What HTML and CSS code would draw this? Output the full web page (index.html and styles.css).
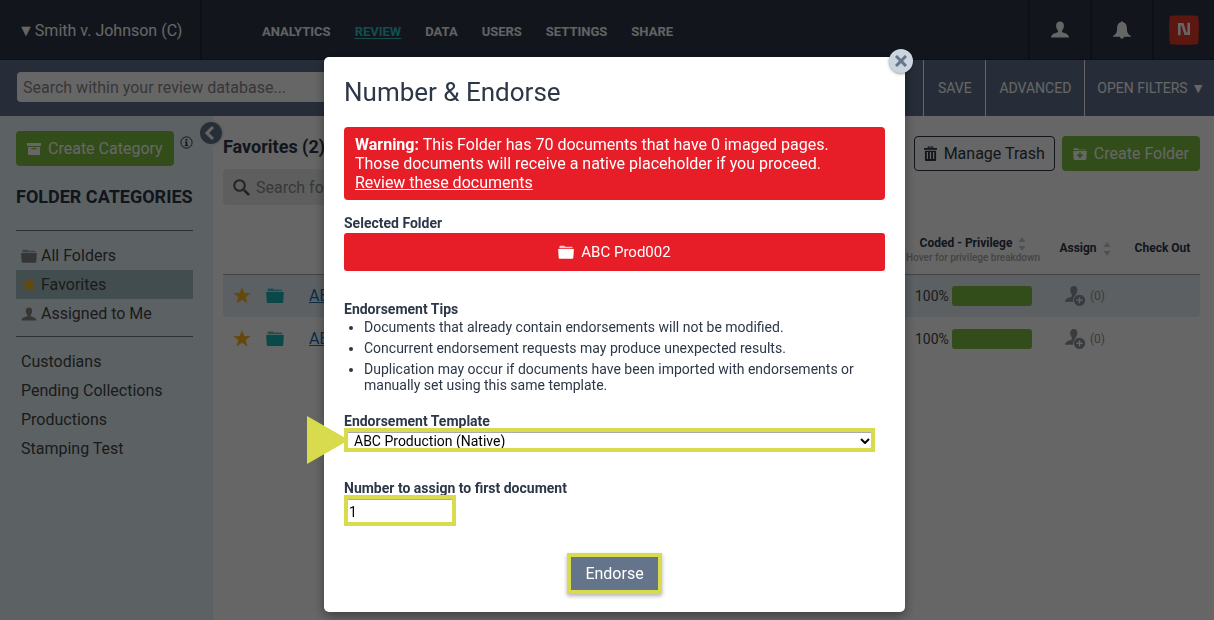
FILE: index.html
```html
<!DOCTYPE html>
<html lang="en">
<head>
    <meta charset="UTF-8">
    <meta name="viewport" content="width=device-width, initial-scale=1.0">
    <title>Number &amp; Endorse</title>
    <link rel="stylesheet" href="styles.css">
</head>
<body>
    <!-- shared icons -->
    <svg class="sprite" aria-hidden="true">
        <symbol id="folder" viewBox="0 0 18 15">
            <path d="M1.500 3.200V1.600L2.300.5H7L8 1.600H15.700L16.300 2.200V3.200Z" opacity=".75"/>
            <path d="M.1 4H17.900L17.200 14Q17.100 15 16.200 15H1.800Q.9 15 .8 14Z"/>
        </symbol>
        <symbol id="star" viewBox="0 0 18 17">
            <path d="M9 .2 11.300 6H17.800L12.700 10 14.500 16.500 9 12.800 3.500 16.500 5.300 10 .2 6H6.700Z"/>
        </symbol>
        <symbol id="user" viewBox="0 0 18 17">
            <path d="M9 .5C11.600.5 13 2.200 12.900 4.800 12.800 7.200 11.900 8.800 11 9.700V11.200C13.800 12.100 17.700 12.800 18 16.500H0C.3 12.800 4.200 12.100 7 11.200V9.700C6.100 8.800 5.200 7.200 5.100 4.800 5 2.200 6.400.5 9 .5Z"/>
        </symbol>
        <symbol id="assign" viewBox="0 0 20 20">
            <path d="M8.800 0C11.300 0 12.500 1.700 12.400 4 12.300 6 11.600 7.500 10.800 8.300V9.200C9 10.500 8 12.500 8.200 15.700H0C.2 12.300 4 11.800 6.800 10.500V8.300C6 7.500 5.300 6 5.200 4 5.100 1.700 6.300 0 8.800 0Z"/>
            <path fill-rule="evenodd" d="M14.500 8.700a5.600 5.600 0 1 0 .01 0ZM13.800 11.200h1.400v2.400h2.400v1.400h-2.400v2.400h-1.400v-2.400h-2.400v-1.400h2.400Z"/>
        </symbol>
        <symbol id="sort" viewBox="0 0 8 14">
            <path d="M4 0 7.500 5H.5ZM4 14 .5 9H7.500Z"/>
        </symbol>
    </svg>

    <header class="topbar">
        <a class="case" href="#">▼<span>Smith v. Johnson (C)</span></a>
        <nav class="nav">
            <a href="#">ANALYTICS</a>
            <a class="current" href="#">REVIEW</a>
            <a href="#">DATA</a>
            <a href="#">USERS</a>
            <a href="#">SETTINGS</a>
            <a href="#">SHARE</a>
        </nav>
        <button class="tool" type="button" aria-label="Account"><svg width="18" height="17"><use href="#user"/></svg></button>
        <button class="tool" type="button" aria-label="Notifications">
            <svg width="18" height="18" viewBox="0 0 18 18"><path d="M8 1.300A1 1 0 0 1 10 1.300C13 2 13.800 4.500 13.900 7.500 14 11 14.500 13 18 15V15.700H11A2 2 0 0 1 7 15.700H0V15C3.500 13 4 11 4.100 7.500 4.200 4.500 5 2 8 1.300Z"/></svg>
        </button>
        <button class="tool" type="button" aria-label="Home">
            <svg width="30" height="30" viewBox="0 0 30 30"><path fill="#e83a2c" d="M2 .8Q15-.4 28 .8 29.200 1 29.300 2 30.400 15 29.300 28 29.200 29 28 29.300 15 30.400 2 29.300.8 29 .7 28-.4 15 .7 2 .8 1 2 .8Z"/><path d="M10.300 20.300V9.300H13.500L16.500 18.700H19.700V7.800" fill="none" stroke="#fff" stroke-width="2.600"/></svg>
        </button>
    </header>

    <div class="searchbar">
        <input type="text" placeholder="Search within your review database..." aria-label="Search database">
        <button type="button">SAVE</button>
        <button type="button">ADVANCED</button>
        <button type="button">OPEN FILTERS ▼</button>
    </div>

    <div class="page">
        <aside class="sidebar">
            <button class="collapse" type="button" aria-label="Collapse">
                <svg width="22" height="22" viewBox="0 0 22 22"><path d="M13 5 7 11 13 17" fill="none" stroke="#fff" stroke-width="3"/></svg>
            </button>
            <div class="create">
                <button class="green" type="button">
                    <svg width="14" height="12" viewBox="0 0 14 12"><path d="M0 0H14V3H0ZM1 4H13V12H1ZM4.500 5V6.300H9.500V5Z" fill-rule="evenodd"/></svg>
                    Create Category
                </button>
                <svg class="info" width="13" height="13" viewBox="0 0 13 13"><circle cx="6.500" cy="6.500" r="5.600" fill="none" stroke="#2d3748"/><path d="M5.500 3H7.300V4.500H5.500ZM4.800 5.500H7.300V9H8.200V10H4.800V9H5.700V6.500H4.800Z"/></svg>
            </div>
            <h2>FOLDER CATEGORIES</h2>
            <ul class="categories">
                <li><a href="#"><svg width="16" height="14"><use href="#folder"/></svg>All Folders</a></li>
                <li class="selected"><a href="#"><svg class="gold" width="16" height="15"><use href="#star"/></svg>Favorites</a></li>
                <li><a href="#"><svg width="16" height="14"><use href="#user"/></svg>Assigned to Me</a></li>
            </ul>
            <ul class="categories">
                <li><a href="#">Custodians</a></li>
                <li><a href="#">Pending Collections</a></li>
                <li><a href="#">Productions</a></li>
                <li><a href="#">Stamping Test</a></li>
            </ul>
        </aside>

        <main class="main">
            <div class="actions">
                <h1>Favorites (2)</h1>
                <button class="outline" type="button">
                    <svg width="13" height="15" viewBox="0 0 14 16"><path fill-rule="evenodd" d="M0 2H4V.5H10V2H14V4H0ZM5.300 1.500V2H8.700V1.500ZM1 5H13V15Q13 16 12 16H2Q1 16 1 15ZM3 6.500V14H4.300V6.500ZM6.300 6.500V14H7.700V6.500ZM9.700 6.500V14H11V6.500Z"/></svg>
                    Manage Trash
                </button>
                <button class="green" type="button">
                    <svg width="14" height="12" viewBox="0 0 15 13"><path fill-rule="evenodd" d="M.5 2.200V1.200Q.5.300 1.500.3H5L6 1.500H13.500L14.200 2.500ZM0 3.300H15L14.300 12.200Q14.200 13 13.300 13H1.700Q.8 13 .7 12.200ZM6.600 5V7.100H4.500V8.900H6.600V11H8.400V8.900H10.500V7.100H8.400V5Z"/></svg>
                    Create Folder
                </button>
            </div>
            <label class="find">
                <svg width="17" height="17" viewBox="0 0 17 17"><path d="M11 11 16 16" stroke="#555" stroke-width="2.500"/><circle cx="6.500" cy="6.500" r="5.300" fill="none" stroke="#555" stroke-width="2"/></svg>
                <input type="text" placeholder="Search folders" aria-label="Search folders">
            </label>
            <table>
                <thead>
                    <tr>
                        <th class="col-icon"></th>
                        <th class="col-icon"></th>
                        <th></th>
                        <th class="col-privilege">Coded - Privilege <svg width="8" height="14"><use href="#sort"/></svg><small>Hover for privilege breakdown</small></th>
                        <th class="col-assign">Assign <svg width="8" height="14"><use href="#sort"/></svg></th>
                        <th class="col-check">Check Out</th>
                    </tr>
                </thead>
                <tbody>
                    <tr>
                        <td><svg class="gold" width="18" height="17"><use href="#star"/></svg></td>
                        <td><svg class="teal" width="18" height="15"><use href="#folder"/></svg></td>
                        <td><a href="#">ABC</a></td>
                        <td><div class="progress">100% <span></span></div></td>
                        <td><div class="assign"><svg width="20" height="20"><use href="#assign"/></svg>(0)</div></td>
                        <td></td>
                    </tr>
                    <tr>
                        <td><svg class="gold" width="18" height="17"><use href="#star"/></svg></td>
                        <td><svg class="teal" width="18" height="15"><use href="#folder"/></svg></td>
                        <td><a href="#">ABC</a></td>
                        <td><div class="progress">100% <span></span></div></td>
                        <td><div class="assign"><svg width="20" height="20"><use href="#assign"/></svg>(0)</div></td>
                        <td></td>
                    </tr>
                </tbody>
            </table>
        </main>
    </div>

    <div class="overlay">
        <form class="modal" role="dialog" aria-labelledby="modal-title">
            <button class="close" type="button" aria-label="Close">
                <svg width="12" height="12" viewBox="0 0 12 12"><path d="M1 1 11 11M11 1 1 11" stroke="#64748b" stroke-width="3"/></svg>
            </button>
            <h2 id="modal-title">Number &amp; Endorse</h2>
            <div class="warning">
                <strong>Warning:</strong> This Folder has 70 documents that have 0 imaged pages.<br>
                Those documents will receive a native placeholder if you proceed.<br>
                <a href="#">Review these documents</a>
            </div>

            <h3>Selected Folder</h3>
            <div class="folder"><svg width="16" height="14"><use href="#folder"/></svg>ABC Prod002</div>

            <h3>Endorsement Tips</h3>
            <ul class="tips">
                <li>Documents that already contain endorsements will not be modified.</li>
                <li>Concurrent endorsement requests may produce unexpected results.</li>
                <li>Duplication may occur if documents have been imported with endorsements or manually set using this same template.</li>
            </ul>

            <label for="template">Endorsement Template</label>
            <div class="field">
                <svg class="pointer" width="42" height="48" viewBox="0 0 42 48"><path d="M0 0 42 24 0 48Z"/></svg>
                <select id="template">
                    <option>ABC Production (Native)</option>
                </select>
                <svg class="chevron" width="10" height="6" viewBox="0 0 10 6"><path d="M1 1 5 5 9 1" fill="none" stroke="#000" stroke-width="2"/></svg>
            </div>

            <label for="number">Number to assign to first document</label>
            <input id="number" type="text" value="1">

            <button class="endorse" type="submit">Endorse</button>
        </form>
    </div>
</body>
</html>
```

FILE: styles.css
```css
* {
    box-sizing: border-box;
}
body {
    margin: 0;
    min-height: 100vh;
    display: flex;
    flex-direction: column;
    font-family: Roboto, "Liberation Sans", sans-serif;
    font-size: 16px;
    color: #2d3748;
}
button, input, select {
    font-family: inherit;
    font-size: 16px;
}
button {
    border: none;
    background: none;
    padding: 0;
    cursor: pointer;
}
h1, h2, h3, ul {
    margin: 0;
    padding: 0;
}
svg {
    fill: currentColor;
    flex: none;
}
.sprite {
    position: absolute;
    width: 0;
    height: 0;
}
.gold {
    color: #f9b61e;
}
.teal {
    color: #19b5b8;
}

/* top bar */
.topbar {
    display: flex;
    height: 60px;
    background: #2d3548;
    border-bottom: 1px solid #222835;
    color: #fff;
}
.topbar a {
    color: #fff;
    text-decoration: none;
}
.case {
    display: flex;
    align-items: center;
    gap: 1px;
    width: 202px;
    padding: 2px 0 0 18px;
    border-right: 2px solid #222835;
}
.nav {
    flex: 1;
    display: flex;
    align-items: center;
    gap: 24px;
    padding: 4px 0 0 60px;
    font-size: 13px;
    font-weight: 700;
}
.topbar .nav a {
    color: #f4f4f4;
}
.topbar .nav .current {
    color: #2cc4c0;
    text-decoration: underline;
    text-underline-offset: 2px;
}
.tool {
    display: flex;
    align-items: center;
    justify-content: center;
    width: 62px;
    border-left: 2px solid #222835;
    color: #fff;
}

/* database search */
.searchbar {
    display: flex;
    align-items: center;
    height: 56px;
    background: #60728c;
}
.searchbar input {
    flex: 1;
    height: 30px;
    margin: 0 30px 2px 17px;
    padding: 0 6px;
    border: none;
    border-radius: 4px;
    background: #fff;
}
input::placeholder {
    color: #8a8a8a;
    opacity: 1;
}
.searchbar button {
    height: 100%;
    min-width: 62px;
    padding: 0 13px;
    border-left: 1px solid #fff;
    color: #fff;
    font-size: 14px;
}
.searchbar button:last-child {
    padding: 0 9px 0 12px;
}

/* sidebar */
.page {
    flex: 1;
    display: flex;
}
.sidebar {
    position: relative;
    width: 213px;
    padding: 15px 20px 0 16px;
    background: #e6f4fb;
    color: #444;
}
.collapse {
    position: absolute;
    top: 4px;
    right: -11px;
    width: 26px;
    height: 26px;
    border: 2px solid #e8eef2;
    border-radius: 50%;
    background: #64748b;
}
.collapse svg {
    display: block;
}
.create {
    display: flex;
    gap: 6px;
}
.info {
    margin-top: 5px;
    color: #2d3748;
}
.green, .outline {
    display: flex;
    align-items: center;
    justify-content: center;
    gap: 7px;
    height: 35px;
    padding: 0 11px;
    border-radius: 4px;
    white-space: nowrap;
}
.green {
    background: #7dc141;
    color: #fff;
}
.outline {
    border: 1px solid #2d3548;
    color: #2d3748;
    padding: 0 9px;
}
.sidebar h2 {
    margin: 20px 0 22px;
    font-size: 18px;
    line-height: 22px;
    white-space: nowrap;
    color: #2d3548;
}
.categories {
    list-style: none;
    padding: 10px 0 8px;
    border-top: 1px solid #777;
}
.categories li {
    height: 29px;
    padding-left: 5px;
}
.categories a {
    display: flex;
    align-items: center;
    gap: 4px;
    height: 100%;
    color: #444;
    text-decoration: none;
}
.categories svg {
    color: #888;
}
.categories .gold {
    color: #f9b61e;
}
.selected {
    background: #a5c1c8;
}

/* folder list */
.main {
    flex: 1;
    padding: 20px 14px 0 10px;
}
.actions {
    display: flex;
    gap: 7px;
}
.actions h1 {
    flex: 1;
    font-size: 18px;
    line-height: 22px;
    color: #2d3548;
}
.find {
    display: flex;
    align-items: center;
    gap: 4px;
    width: 300px;
    height: 36px;
    margin-top: -2px;
    padding-left: 10px;
    border-radius: 4px;
    background: #ececec;
}
.find input {
    border: none;
    background: none;
    outline: none;
}
table {
    width: 100%;
    margin-top: 14px;
    border-collapse: collapse;
    table-layout: fixed;
}
th {
    height: 55px;
    padding: 4px 0 0;
    border-bottom: 1px solid #aaa;
    font-size: 12px;
    line-height: 14px;
    white-space: nowrap;
}
th svg {
    margin-left: 3px;
    vertical-align: middle;
    color: #c0cad5;
}
th small {
    display: block;
    font-size: 10px;
    font-weight: 500;
    color: #aaa;
}
td {
    height: 43px;
    padding: 0;
}
td svg {
    display: block;
    margin-left: 10px;
}
td a {
    margin-left: 20px;
    color: #1a6fb5;
}
.col-icon {
    width: 33px;
}
.col-privilege {
    width: 144px;
    padding-top: 8px;
}
.col-assign {
    width: 80px;
}
.col-check {
    width: 75px;
}
tbody tr:first-child td {
    background: #e6f1f8;
}
tbody td:first-child {
    border-radius: 4px 0 0 4px;
}
tbody td:last-child {
    border-radius: 0 4px 4px 0;
}
.progress, .assign {
    display: flex;
    align-items: center;
}
.progress {
    gap: 3px;
    padding-left: 14px;
    font-size: 14px;
    color: #444;
}
.progress span {
    width: 80px;
    height: 20px;
    border-radius: 3px;
    background: #7dc141;
}
.assign {
    gap: 5px;
    padding-left: 20px;
    font-size: 12px;
    color: #8c96a3;
}
.assign svg {
    margin: 0;
}

/* modal */
.overlay {
    position: fixed;
    inset: 0;
    padding: 57px 0 0 15px;
    background: rgba(0, 0, 0, 0.6);
}
.modal {
    position: relative;
    max-width: 581px;
    margin: 0 auto;
    padding: 20px 20px 18px;
    border-radius: 5px;
    background: #fff;
    box-shadow: 0 4px 12px rgba(0, 0, 0, 0.4);
    font-size: 14px;
}
.close {
    position: absolute;
    top: -8px;
    right: -8px;
    display: flex;
    align-items: center;
    justify-content: center;
    width: 24px;
    height: 24px;
    border-radius: 50%;
    background: #cbd5e0;
    box-shadow: 0 1px 3px rgba(0, 0, 0, 0.4);
}
.modal h2 {
    margin-bottom: 20px;
    font-size: 26px;
    font-weight: 400;
    line-height: 30px;
}
.modal h3, .modal label {
    display: block;
    font-size: 14px;
    font-weight: 700;
    line-height: 14px;
    margin-bottom: 3px;
}
.warning {
    margin-bottom: 16px;
    padding: 8px 11px;
    border-radius: 4px;
    background: #e71d28;
    color: #fff;
    font-size: 16px;
    line-height: 19px;
}
.warning a {
    color: #fff;
}
.folder {
    display: flex;
    align-items: center;
    justify-content: center;
    gap: 7px;
    height: 38px;
    margin-bottom: 31px;
    border-radius: 3px;
    background: #e71d28;
    color: #fff;
    font-size: 15px;
}
.tips {
    margin-bottom: 21px;
    padding-left: 20px;
    line-height: 16px;
}
.tips li + li {
    margin-top: 5px;
}
.modal label {
    margin-bottom: 0;
}
.field {
    position: relative;
    margin: 0 10px 29px 0;
}
.pointer {
    position: absolute;
    top: -12px;
    left: -37px;
    color: #d8db4e;
}
.chevron {
    position: absolute;
    top: 10px;
    right: 5px;
    pointer-events: none;
}
select {
    display: block;
    width: 100%;
    height: 24px;
    padding: 1px 6px 0;
    border: 4px solid #d8db4e;
    border-radius: 0;
    background: #fff;
    box-shadow: inset 0 1px #aaa;
    appearance: none;
    color: #000;
    font-size: 14px;
}
#number {
    position: relative;
    display: block;
    width: 112px;
    height: 31px;
    padding: 3px 1px 0;
    border: 4px solid #d8db4e;
    background: #fff;
    box-shadow: inset 0 1px #aaa;
    font-size: 14px;
}
.endorse {
    display: block;
    margin: 27px auto 0;
    height: 41px;
    padding: 0 14px;
    border: 4px solid #d8db4e;
    background: #64748b;
    box-shadow: 0 2px 4px rgba(0, 0, 0, 0.3);
    color: #fff;
}
```
